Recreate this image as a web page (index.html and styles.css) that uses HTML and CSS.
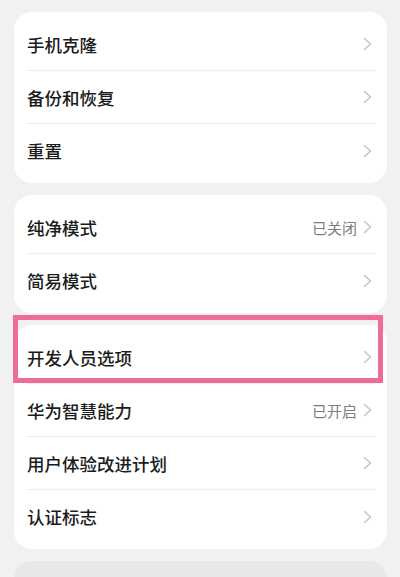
FILE: index.html
```html
<!DOCTYPE html>
<html lang="zh-CN">

<head>
    <meta charset="UTF-8">
    <meta name="viewport" content="width=device-width, initial-scale=1.0">
    <title>系统和更新</title>
    <link rel="stylesheet" href="styles.css">
</head>

<body>

    <div class="page">
        <div class="card">
            <div class="row">
                <div class="row-inner">
                    <span class="label">手机克隆</span>
                    <svg class="chevron" viewBox="0 0 9 14"><path d="M1.5 1.5 L7.5 7 L1.5 12.5"/></svg>
                </div>
            </div>
            <div class="row">
                <div class="row-inner">
                    <span class="label">备份和恢复</span>
                    <svg class="chevron" viewBox="0 0 9 14"><path d="M1.5 1.5 L7.5 7 L1.5 12.5"/></svg>
                </div>
            </div>
            <div class="row">
                <div class="row-inner">
                    <span class="label">重置</span>
                    <svg class="chevron" viewBox="0 0 9 14"><path d="M1.5 1.5 L7.5 7 L1.5 12.5"/></svg>
                </div>
            </div>
        </div>

        <div class="card">
            <div class="row">
                <div class="row-inner">
                    <span class="label">纯净模式</span>
                    <span class="value">已关闭</span>
                    <svg class="chevron" viewBox="0 0 9 14"><path d="M1.5 1.5 L7.5 7 L1.5 12.5"/></svg>
                </div>
            </div>
            <div class="row">
                <div class="row-inner">
                    <span class="label">简易模式</span>
                    <svg class="chevron" viewBox="0 0 9 14"><path d="M1.5 1.5 L7.5 7 L1.5 12.5"/></svg>
                </div>
            </div>
        </div>

        <div class="card">
            <!-- рамка-выделение поверх пункта -->
            <div class="highlight"></div>
            <div class="row">
                <div class="row-inner">
                    <span class="label">开发人员选项</span>
                    <svg class="chevron" viewBox="0 0 9 14"><path d="M1.5 1.5 L7.5 7 L1.5 12.5"/></svg>
                </div>
            </div>
            <div class="row">
                <div class="row-inner">
                    <span class="label">华为智慧能力</span>
                    <span class="value">已开启</span>
                    <svg class="chevron" viewBox="0 0 9 14"><path d="M1.5 1.5 L7.5 7 L1.5 12.5"/></svg>
                </div>
            </div>
            <div class="row">
                <div class="row-inner">
                    <span class="label">用户体验改进计划</span>
                    <svg class="chevron" viewBox="0 0 9 14"><path d="M1.5 1.5 L7.5 7 L1.5 12.5"/></svg>
                </div>
            </div>
            <div class="row">
                <div class="row-inner">
                    <span class="label">认证标志</span>
                    <svg class="chevron" viewBox="0 0 9 14"><path d="M1.5 1.5 L7.5 7 L1.5 12.5"/></svg>
                </div>
            </div>
        </div>

        <div class="card card-muted"></div>
    </div>

</body>

</html>
```

FILE: styles.css
```css
body, html {
    margin: 0;
    padding: 0;
    background: #f1f1f1;
    font-family: "Noto Sans CJK SC", "Noto Sans", sans-serif;
    color: #1b1b1b;
    overflow: hidden;
}

.page {
    padding-top: 12px;
}

.card {
    position: relative;
    background: #fff;
    border-radius: 18px;
    margin: 0 13px 12px 14px;
    padding: 6px 0;
}

.card-muted {
    background: #e8e8e8;
    height: 60px;
    padding: 0;
}

.row {
    padding: 0 11px 0 13px;
}

.row-inner {
    height: 53px;
    display: flex;
    align-items: center;
    padding-right: 4px;
    border-bottom: 1px solid #ededed;
    box-sizing: border-box;
}

.row:last-child .row-inner {
    border-bottom: none;
}

.label {
    flex: 1;
    font-size: 17.5px;
    font-weight: 500;
}

.value {
    font-size: 15px;
    color: #7d7d7d;
    margin-right: 6px;
}

.chevron {
    width: 9px;
    height: 14px;
    fill: none;
    stroke: #c4c4c4;
    stroke-width: 1.5;
    stroke-linecap: round;
    stroke-linejoin: round;
}

.highlight {
    position: absolute;
    top: -10px;
    left: -1px;
    width: 370px;
    height: 68px;
    border: 5px solid #ef6b9b;
    box-sizing: border-box;
    pointer-events: none;
}
```
